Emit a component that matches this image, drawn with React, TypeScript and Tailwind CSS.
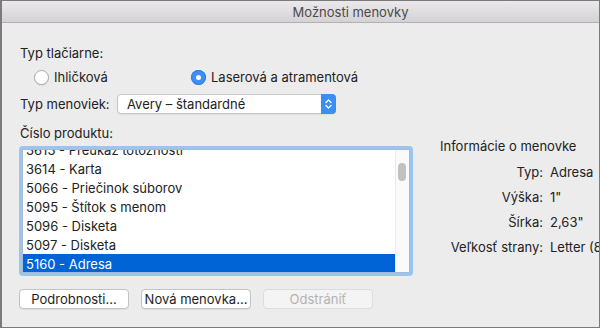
import React from 'react';

const products = [
  '3613 - Preukaz totožnosti',
  '3614 - Karta',
  '5066 - Priečinok súborov',
  '5095 - Štítok s menom',
  '5096 - Disketa',
  '5097 - Disketa',
  '5160 - Adresa',
];

const info: [string, string][] = [
  ['Typ:', 'Adresa'],
  ['Výška:', '1"'],
  ['Šírka:', '2,63"'],
  ['Veľkosť strany:', 'Letter (8,5 × 11")'],
];

const Radio: React.FC<{ checked?: boolean; label: string }> = ({ checked, label }) => (
  <div className="flex items-center gap-[5px]">
    {checked ? (
      <span className="flex h-[15px] w-[15px] items-center justify-center rounded-full bg-[#3b8ff5] shadow-[inset_0_0_0_1px_#2f7fe6]">
        <span className="h-[5px] w-[5px] rounded-full bg-white" />
      </span>
    ) : (
      <span className="h-[15px] w-[15px] rounded-full border border-[#a9a9a9] bg-white shadow-[0_1px_1px_rgba(0,0,0,0.08)]" />
    )}
    <span>{label}</span>
  </div>
);

const Button: React.FC<{ label: string; disabled?: boolean }> = ({ label, disabled }) => (
  <button
    type="button"
    className={
      disabled
        ? 'h-[20px] w-[110px] rounded-[4px] border border-[#dcdcdc] bg-[#f4f4f4] text-[#b3b3b3]'
        : 'h-[20px] w-[110px] rounded-[4px] border border-[#c3c3c3] bg-white text-[#1e1e1e] shadow-[0_1px_0_rgba(0,0,0,0.06)]'
    }
  >
    {label}
  </button>
);

const App: React.FC = () => {
  return (
    <div
      className="flex h-[328px] w-[600px] flex-col overflow-hidden border border-l-2 border-[#7b7b7b] bg-[#ececec] text-[13px] leading-[16px] text-[#222]"
      style={{ fontFamily: 'Inter, "Liberation Sans", sans-serif' }}
    >
      {/* title bar */}
      <div className="flex h-[22px] shrink-0 items-center justify-center border-b border-[#b1b1b1] bg-gradient-to-b from-[#ebe9eb] to-[#d4d2d4] pl-[100px] text-[#4a4a4a]">
        Možnosti menovky
      </div>

      <div className="flex flex-col pl-[18px]">
        <div className="mt-[22px]">Typ tlačiarne:</div>

        <div className="mt-[8px] flex">
          <div className="w-[171px] pl-[14px]">
            <Radio label="Ihličková" />
          </div>
          <Radio checked label="Laserová a atramentová" />
        </div>

        <div className="mt-[9px] flex items-center">
          <span className="w-[97px]">Typ menoviek:</span>
          <div className="flex h-[20px] w-[219px] items-center justify-between rounded-[4px] border border-[#c6c6c6] bg-white shadow-[0_1px_1px_rgba(0,0,0,0.06)]">
            <span className="pl-[9px]">Avery – štandardné</span>
            <span className="-mr-px flex h-[20px] w-[15px] items-center justify-center rounded-r-[4px] bg-[#3a8ff5]">
              <svg width="7" height="12" viewBox="0 0 7 12" fill="none" stroke="white" strokeWidth="1.3" strokeLinecap="round" strokeLinejoin="round">
                <path d="M1 4.5 3.5 2 6 4.5" />
                <path d="M1 7.5 3.5 10 6 7.5" />
              </svg>
            </span>
          </div>
        </div>

        <div className="mt-[11px] flex items-start">
          <div className="flex flex-col">
            <div>Číslo produktu:</div>
            <div className="-ml-[1px] mt-[5px] h-[130px] w-[394px] rounded-[4px] border-[3px] border-[#9cc4f0]">
              <div className="flex h-full w-full overflow-hidden border border-[#a8bbd2] bg-white">
                <div className="flex-1 overflow-hidden">
                  <div className="-mt-[10px]">
                    {products.map((p, i) => (
                      <div
                        key={p}
                        className={
                          i === products.length - 1
                            ? 'flex h-[19px] items-center bg-[#0064d7] pl-[3px] text-white'
                            : 'flex h-[19px] items-center pl-[3px]'
                        }
                      >
                        {p}
                      </div>
                    ))}
                  </div>
                </div>
                <div className="w-[14px] border-l border-[#ececec] bg-[#fafafa] pl-[2px] pt-[13px]">
                  <div className="h-[18px] w-[8px] rounded-full bg-[#c1c1c1]" />
                </div>
              </div>
            </div>
          </div>

          <div className="ml-[27px] mt-[13px] flex flex-col whitespace-nowrap">
            <div>Informácie o menovke</div>
            <div className="mt-[10px] flex flex-col gap-[9px]">
              {info.map(([k, v]) => (
                <div key={k} className="flex">
                  <span className="w-[103px] text-right">{k}</span>
                  <span className="ml-[7px]">{v}</span>
                </div>
              ))}
            </div>
          </div>
        </div>

        <div className="-ml-px mt-[13px] flex gap-[12px]">
          <Button label="Podrobnosti..." />
          <Button label="Nová menovka..." />
          <Button label="Odstrániť" disabled />
        </div>
      </div>
    </div>
  );
};

export default App;
